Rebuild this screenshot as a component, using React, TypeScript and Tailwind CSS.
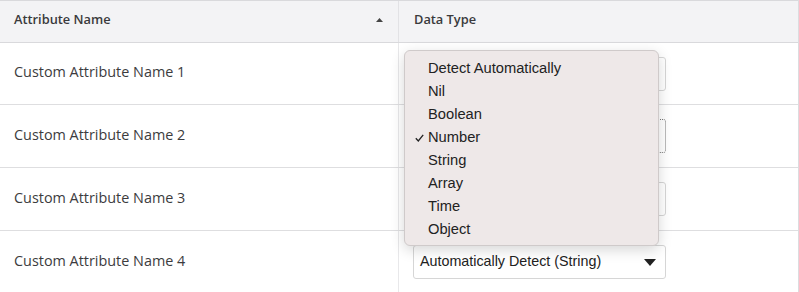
import React from "react";

const rows = [
  { name: "Custom Attribute Name 1", h: "h-[62px]", sel: "", focus: false },
  { name: "Custom Attribute Name 2", h: "h-[63px]", sel: "", focus: true },
  { name: "Custom Attribute Name 3", h: "h-[63px]", sel: "", focus: false },
  { name: "Custom Attribute Name 4", h: "h-[62px]", sel: "Automatically Detect (String)", focus: false },
];

const options = ["Detect Automatically", "Nil", "Boolean", "Number", "String", "Array", "Time", "Object"];

function Select({ label, focus }: { label: string; focus: boolean }) {
  return (
    <div
      className={
        "ml-[14px] flex h-[34px] w-[253px] items-center justify-between rounded-[3px] bg-white pl-[6px] pr-[9px] " +
        (focus ? "border border-dotted border-[#777]" : "border border-[#d6d6d6]")
      }
      style={{ fontFamily: '"Liberation Sans", Arial, sans-serif' }}
    >
      <span className="text-[14.3px] text-[#222]">{label}</span>
      <svg width="12" height="7" viewBox="0 0 12 7">
        <path d="M0 0 L12 0 L6 7 Z" fill="#222" />
      </svg>
    </div>
  );
}

export default function App() {
  return (
    <div className="relative h-[292px] w-[799px] overflow-hidden bg-white" style={{ fontFamily: '"Open Sans", Lato, sans-serif' }}>
      <div className="w-[799px] border-r border-[#dcdcdf]">
        <div className="flex h-[43px] border-t border-b border-[#d9d9dc] bg-[#f3f3f5]">
          <div className="flex w-[399px] items-center justify-between border-r border-[#e2e2e5] pb-[3px] pl-[14px] pr-[14px]">
            <span className="text-[12.8px] font-semibold text-[#3a3a3c]">Attribute Name</span>
            <svg width="7" height="4" viewBox="0 0 7 4" className="mr-[1px]">
              <path d="M0 4 L3.5 0 L7 4 Z" fill="#444" />
            </svg>
          </div>
          <div className="flex flex-1 items-center pb-[3px] pl-[15px]">
            <span className="text-[12.8px] font-semibold text-[#3a3a3c]">Data Type</span>
          </div>
        </div>
        {rows.map((r, i) => (
          <div key={i} className={"flex border-b border-[#dedee0] " + r.h + (i === 3 ? " border-b-0" : "")}>
            <div className="flex w-[399px] items-center border-r border-[#e8e8ea] pb-[3px] pl-[14px]">
              <span className="text-[14.4px] text-[#3c3c3e]">{r.name}</span>
            </div>
            <div className="flex flex-1 items-center">
              <Select label={r.sel} focus={r.focus} />
            </div>
          </div>
        ))}
      </div>

      <div
        className="absolute left-[404px] top-[50px] w-[255px] rounded-[6px] border border-[#cfcaca] bg-[#eee8e8] pb-[4px] pt-[6px] shadow-[0_4px_14px_rgba(0,0,0,0.16)]"
        style={{ fontFamily: '"Liberation Sans", Arial, sans-serif' }}
      >
        {options.map((o) => (
          <div key={o} className="relative flex h-[23px] items-center pl-[23px] text-[14.7px] text-[#222]">
            {o === "Number" && (
              <svg className="absolute left-[10px] top-[8px]" width="9" height="8" viewBox="0 0 9 8">
                <path d="M0.8 4.2 L3.3 7 L8.2 0.8" fill="none" stroke="#222" strokeWidth="1.3" />
              </svg>
            )}
            {o}
          </div>
        ))}
      </div>
    </div>
  );
}
